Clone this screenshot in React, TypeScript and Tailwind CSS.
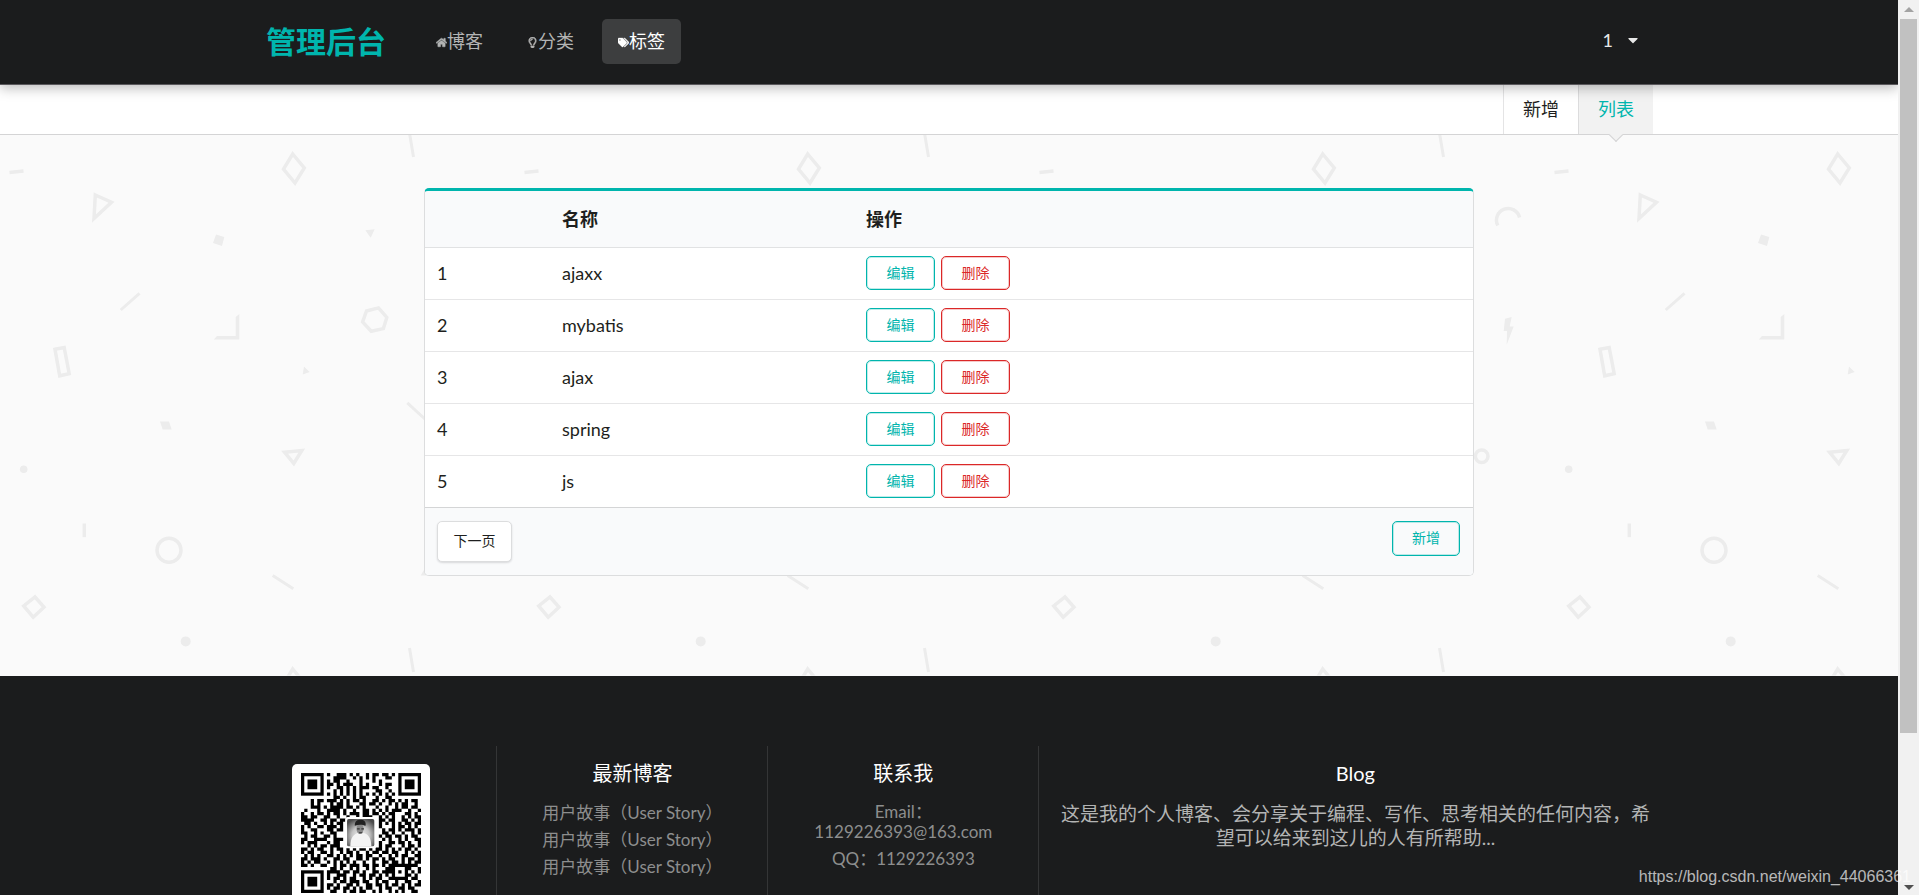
import { FaCaretDown, FaHome, FaRegLightbulb, FaTags } from "react-icons/fa";

type Tag = { id: number; name: string };

const tags: Tag[] = [
  { id: 1, name: "ajaxx" },
  { id: 2, name: "mybatis" },
  { id: 3, name: "ajax" },
  { id: 4, name: "spring" },
  { id: 5, name: "js" },
];

const navItems = [
  { label: "博客", icon: FaHome, active: false },
  { label: "分类", icon: FaRegLightbulb, active: false },
  { label: "标签", icon: FaTags, active: true },
];

const latestBlogs = ["用户故事（User Story）", "用户故事（User Story）", "用户故事（User Story）"];

// Data modules of the QR code, the finder squares are drawn on their own
const qrRows = [
  "........#..###.#.#..#.##.##.#........",
  "..........####..#.#.#.#...##.........",
  "........#.##..#...#...#.#............",
  "........##.#.###..#.#...#.##.........",
  "........#..##.#.#.###.##..#..........",
  "..........#.#.#.#.#....##..#.........",
  "........#.#.#.#.#.#.#.#.#.#.#........",
  "..........##.#..#.##...#..##.........",
  "...#.##.###.#.#.##.#..##.#.##.#.#.##.",
  "...#.#...#.##.#...##.##.#..#.#.##..#.",
  "...###.#.####.##.#.#...#..#..#.##.##.",
  ".#...#..####.#..#..##.#.#.#.###..#..#",
  "#..#.##.#.##.#.###.##.##.#.##...##.#.",
  "##.##..##..#..#..#.###..#.#.#..#.#.##",
  "####..##.##.##..........##.##..##.#.#",
  ".##.#..#.#.##...........#.#.#.#.##.##",
  "#.#..##.###.#...........#...#.##.#.#.",
  "#..##...##.##............#.##.#.###.#",
  "##..#.#..##..............##.#..#..#.#",
  ".#.##..##.#.............#.##.##.#.##.",
  "##..####..###............#.#..#.#..##",
  "#.###...#.##............#..##.##.#..#",
  "..#.#.##.###............#.##...#.##.#",
  "##.#.##..#.##.#.#.##.#.##.#.#.#.##.#.",
  "#.##..##.#..#.##.#..#.##.##.##..#.#.#",
  ".#.#.#..##.#.#.#.##.##..#..#.#.##..##",
  "##.###.#..##.##..##.#.##.#.##..#.##.#",
  "#.#.##..#.#.#.#.#..#..#..##.##.#.#.##",
  "##.#..##..#.##.###.##.##.#.#########.",
  ".........##.#..#.#..#.#...###...##..#",
  "........####.##.##.#..##.####.#.#.#.#",
  "........#..###..#.##.##.#.#.#...##.#.",
  "........#.##.#.##..#.#.##..######.##.",
  "..........#.##.###.##..#.##..#..##..#",
  "........##.#..##.#..##.##.#.##.#.#.##",
  "........#.##.##.#.#.##..#.##..##.##..",
  ".........##..#.##.##..#.#..#.#.#..##.",
];

function QrCode() {
  const path = qrRows
    .map((row, y) =>
      row
        .split("")
        .map((cell, x) => (cell === "#" ? `M${x} ${y}h1v1h-1z` : ""))
        .join("")
    )
    .join("");

  return (
    <svg viewBox="0 0 37 37" className="block size-[120px]" role="img" aria-label="QR code">
      <defs>
        <radialGradient id="portrait" cx="0.5" cy="0.6" r="0.65">
          <stop offset="0" stopColor="#f2f2f2" />
          <stop offset="0.5" stopColor="#c4c4c4" />
          <stop offset="1" stopColor="#4a4a4a" />
        </radialGradient>
      </defs>
      <path d={path} fill="#000" />
      {[
        [0, 0],
        [30, 0],
        [0, 30],
      ].map(([x, y]) => (
        <g key={`${x}-${y}`}>
          <rect x={x + 0.5} y={y + 0.5} width="6" height="6" fill="none" stroke="#000" />
          <rect x={x + 2} y={y + 2} width="3" height="3" fill="#000" />
        </g>
      ))}
      <rect x="13.6" y="13.6" width="9.6" height="9.6" rx="0.8" fill="#fff" />
      <rect x="14.2" y="14.2" width="8.4" height="8.4" rx="0.5" fill="url(#portrait)" />
      <path d="M15.2 22.6c0-2.6 1-3.9 2.7-4.2h1c1.9.3 2.7 1.6 2.8 4.2z" fill="#f4f4f4" />
      <ellipse cx="18.2" cy="17.2" rx="1.1" ry="1.6" fill="#8a8a8a" />
      <path d="M16.6 16.3c-.1-1.3.6-1.9 1.7-1.9s1.9.6 1.6 1.9c-.9-.5-2.3-.5-3.3 0z" fill="#222" />
      <path d="M17.3 17h.8v.4h-.8zM18.6 17h.8v.4h-.8zM17.9 18.3h1v.3h-1z" fill="#333" />
    </svg>
  );
}

function PatternBackground() {
  return (
    <svg className="absolute inset-0 size-full" aria-hidden="true">
      <defs>
        <pattern id="shapes" width="515" height="515" patternUnits="userSpaceOnUse">
          <g fill="none" stroke="#ececec" strokeWidth="3.5">
            <path d="M9.5 37.5L23.5 36" />
            <path d="M95.3 60L111.5 67.2L94 83.5Z" />
            <path d="M292.7 19L304.3 33L295 48L283.5 34Z" />
            <path d="M409.5 -2L413.5 22M409.5 513L410 516" strokeWidth="3" />
            <path d="M120.7 175L139.5 158.3" strokeWidth="3" />
            <path d="M366.5 176L378.5 172.9L386.8 182.4L383.4 193.6L371.2 196.3L362.6 186.9Z" />
            <path d="M55 214.3L64.2 212.5L69.2 238.7L59.7 240.8Z" />
            <path d="M407.3 267.9L426 285" strokeWidth="3" />
            <path d="M284.5 317.2L301.8 315.5L293.8 328.5Z" />
            <path d="M84.3 388.5V402.2" />
            <circle cx="169" cy="415.2" r="12" />
            <path d="M272.7 440.5L293.3 453.8" strokeWidth="3" />
            <path d="M35 462L44 472.2L33.2 482.2L23.7 471Z" />
            <path d="M467.8 90.5A11.7 11.7 0 1 1 489.6 82.5" />
            <circle cx="451.7" cy="321.2" r="6.3" />
          </g>
          <g fill="#ececec">
            <path d="M216 99.5L224.3 102L222 111L213 108Z" />
            <path d="M365.3 95.3L374.7 94.3L370.7 102.7Z" />
            <path d="M239.3 179V204.4H213.7L217 200.9H235.7V182Z" />
            <path d="M304 231.4L309.7 237L302.7 239.5Z" />
            <path d="M160 286.5H169L171.7 294.5H162.7Z" />
            <path d="M420.7 440.5L424.5 434L430 440.5Z" />
            <path d="M475 183.7L481.7 182L479.7 191.4H483.7L476.7 209.7L477 196H473.7Z" />
            <circle cx="23.7" cy="334.2" r="3.8" />
            <circle cx="185.7" cy="506.4" r="5" />
          </g>
        </pattern>
      </defs>
      <rect width="100%" height="100%" fill="url(#shapes)" />
    </svg>
  );
}

function Header() {
  return (
    <header className="relative z-10 border-b border-[#5a585c] bg-[#1b1c1d] shadow-[0_3px_12px_rgba(0,0,0,0.28)]">
      <div className="mx-auto flex h-[84px] max-w-[1408px] items-center pr-3 pb-[2px] pl-[21px]">
        <h2 className="mr-[34px] text-[30px] leading-9 font-bold text-[#00b5ad]">管理后台</h2>
        <nav className="flex gap-3">
          {navItems.map(({ label, icon: Icon, active }) => (
            <a
              key={label}
              href="#"
              className={
                active
                  ? "flex h-[45px] items-center rounded-[5px] bg-[#3d3e3f] px-4 text-white"
                  : "flex h-[45px] items-center rounded-[5px] px-4 text-[#b3b4b4]"
              }
            >
              <Icon className="mt-[3px] size-[11px] stroke-current stroke-[24]" aria-hidden="true" />
              {label}
            </a>
          ))}
        </nav>
        <button type="button" className="ml-auto flex items-center gap-3 pb-[2px] text-[#e8e8e8]">
          1
          <FaCaretDown className="size-4" aria-hidden="true" />
        </button>
      </div>
    </header>
  );
}

function SubMenu() {
  return (
    <div className="relative z-[1] border-b border-[#d4d4d5] bg-white">
      <nav className="mx-auto flex h-[49px] max-w-[1408px] justify-end">
        <a href="#" className="flex items-center border-l border-[#e4e4e5] px-[19px] pb-[2px] text-[#1e1f20]">
          新增
        </a>
        <a
          href="#"
          className="relative flex items-center border-l border-[#dcdcdd] bg-[#f2f2f2] px-[19px] pb-[2px] text-[#00b5ad]"
        >
          列表
          <span className="absolute -bottom-[6px] left-1/2 size-[10px] -translate-x-1/2 rotate-45 border-r border-b border-[#d4d4d5] bg-[#f2f2f2]" />
        </a>
      </nav>
    </div>
  );
}

function TagTable() {
  return (
    <div className="relative mx-auto max-w-[1050px] overflow-hidden rounded-[5px] border border-t-[3px] border-[#dcddde] border-t-[#00b5ad] bg-white">
      <table className="w-full table-fixed border-collapse text-left text-[#1e1f20]">
        <colgroup>
          <col className="w-[125px]" />
          <col className="w-[304px]" />
          <col />
        </colgroup>
        <thead>
          <tr className="h-[56px] border-b border-[#e1e2e3] bg-[#f9fafb]">
            <th className="px-3" aria-label="序号" />
            <th className="px-3 font-bold">名称</th>
            <th className="px-3 font-bold">操作</th>
          </tr>
        </thead>
        <tbody>
          {tags.map((tag) => (
            <tr key={tag.id} className="h-[52px] border-b border-[#e6e6e7] last:border-[#d4d5d6]">
              <td className="px-3">{tag.id}</td>
              <td className="px-3">{tag.name}</td>
              <td className="px-3">
                <div className="flex gap-[6px]">
                  <a
                    href="#"
                    className="flex h-[34px] w-[69px] items-center justify-center rounded-[5px] border border-[#00b5ad] text-sm text-[#00b5ad] shadow-[inset_0_0_0_1px_rgba(0,181,173,0.25)]"
                  >
                    编辑
                  </a>
                  <a
                    href="#"
                    className="flex h-[34px] w-[69px] items-center justify-center rounded-[5px] border border-[#db2828] text-sm text-[#db2828] shadow-[inset_0_0_0_1px_rgba(219,40,40,0.25)]"
                  >
                    删除
                  </a>
                </div>
              </td>
            </tr>
          ))}
        </tbody>
        <tfoot>
          <tr className="bg-[#f9fafb]">
            <td colSpan={3} className="py-[13px] pr-[13px] pl-3">
              <div className="flex items-start justify-between">
                <a
                  href="#"
                  className="flex h-[41px] w-[75px] items-center justify-center rounded-[5px] border border-[#dcddde] bg-white text-sm shadow-[0_1px_2px_rgba(34,36,38,0.15)]"
                >
                  下一页
                </a>
                <a
                  href="#"
                  className="flex h-[35px] w-[68px] items-center justify-center rounded-[5px] border border-[#00b5ad] text-sm text-[#00b5ad] shadow-[inset_0_0_0_1px_rgba(0,181,173,0.25)]"
                >
                  新增
                </a>
              </div>
            </td>
          </tr>
        </tfoot>
      </table>
    </div>
  );
}

function Footer() {
  return (
    <footer className="flex-1 bg-[#1b1c1d] pt-[70px] text-center">
      <div className="mx-auto grid max-w-[1445px] grid-cols-[3fr_3fr_3fr_7fr]">
        <div className="flex h-[210px] justify-center border-r border-[#343536] pt-[18px]">
          <div className="flex size-[138px] items-start justify-center rounded-[5px] bg-white pt-[9px]">
            <QrCode />
          </div>
        </div>
        <div className="border-r border-[#343536] px-[18px] pt-[14px]">
          <h4 className="text-xl leading-[26px] text-white">最新博客</h4>
          <ul className="mt-[13px] text-[17px] text-[#8d8e8e]">
            {latestBlogs.map((title, i) => (
              <li key={i} className="h-[27px] leading-[27px]">
                <a href="#">{title}</a>
              </li>
            ))}
          </ul>
        </div>
        <div className="border-r border-[#343536] px-[18px] pt-[14px]">
          <h4 className="text-xl leading-[26px] text-white">联系我</h4>
          <ul className="mt-4 text-[17px] text-[#8d8e8e]">
            <li className="leading-5">
              <a href="#">
                Email：
                <br />
                1129226393@163.com
              </a>
            </li>
            <li className="mt-[7px] leading-5">
              <a href="#">QQ：1129226393</a>
            </li>
          </ul>
        </div>
        <div className="px-[18px] pt-[14px]">
          <h4 className="text-xl leading-[26px] text-white">Blog</h4>
          <p className="mt-4 text-[19px] leading-6 text-[#b3b4b4]">
            这是我的个人博客、会分享关于编程、写作、思考相关的任何内容，希望可以给来到这儿的人有所帮助...
          </p>
        </div>
      </div>
    </footer>
  );
}

function ScrollRail() {
  return (
    <div className="flex w-[21px] shrink-0 flex-col items-center bg-[#f1f1f1]" aria-hidden="true">
      <div className="flex h-[19px] items-center">
        <svg viewBox="0 0 10 5" className="h-[5px] w-[10px]">
          <path d="M0 5L5 0L10 5Z" fill="#a3a3a3" />
        </svg>
      </div>
      <div className="flex w-full flex-1 justify-center">
        <div className="h-5/6 w-[17px] bg-[#c1c1c1]" />
      </div>
      <div className="flex h-[19px] items-center pt-1">
        <svg viewBox="0 0 10 5" className="h-[5px] w-[10px]">
          <path d="M0 0L5 5L10 0Z" fill="#505050" />
        </svg>
      </div>
    </div>
  );
}

export default function App() {
  return (
    <div className="relative flex h-screen overflow-hidden bg-white font-['Lato','Noto_Sans_CJK_SC',sans-serif] text-lg">
      <div className="flex min-w-0 flex-1 flex-col overflow-hidden">
        <Header />
        <SubMenu />
        <main className="relative bg-[#fafafa] pt-[53px] pb-[100px]">
          <PatternBackground />
          <TagTable />
        </main>
        <Footer />
      </div>
      <ScrollRail />
      <span className="absolute right-2 bottom-[6px] font-['Liberation_Sans',sans-serif] text-base text-white/70">
        https://blog.csdn.net/weixin_44066361
      </span>
    </div>
  );
}
